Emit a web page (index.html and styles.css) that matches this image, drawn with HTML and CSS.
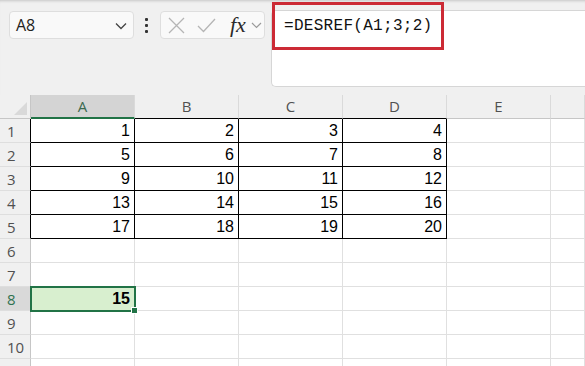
FILE: index.html
```html
<!DOCTYPE html>
<html lang="pt">
<head>
    <meta charset="UTF-8">
    <meta name="viewport" content="width=device-width, initial-scale=1.0">
    <title>DESREF</title>
    <link rel="stylesheet" href="styles.css">
</head>
<body>
    <div class="barra">
        <div class="caixa-nome">
            <span>A8</span>
            <svg class="seta" width="12" height="8" viewBox="0 0 12 8"><path d="M1 1.5 L6 6.5 L11 1.5" fill="none" stroke="#444" stroke-width="1.3"/></svg>
        </div>
        <div class="pontos"><i></i><i></i><i></i></div>
        <div class="grupo-fx">
            <svg width="17" height="17" viewBox="0 0 17 17"><path d="M1 1 L16 16 M16 1 L1 16" stroke="#b5b5b5" stroke-width="1.3"/></svg>
            <svg width="19" height="15" viewBox="0 0 19 15"><path d="M1 8 L6.5 13.5 L18 1" fill="none" stroke="#b5b5b5" stroke-width="1.3"/></svg>
            <span class="fx">fx</span>
            <svg width="11" height="7" viewBox="0 0 11 7"><path d="M1 1 L5.5 5.5 L10 1" fill="none" stroke="#9a9a9a" stroke-width="1.2"/></svg>
        </div>
        <div class="formula">=DESREF(A1;3;2)</div>
        <div class="destaque"></div>
    </div>

    <div class="planilha">
        <div class="c hd canto"><svg width="13" height="13" viewBox="0 0 13 13"><path d="M13 0 L13 13 L0 13 Z" fill="#d9d9d9"/></svg></div>
        <div class="c hd sel-col">A</div>
        <div class="c hd preto">B</div>
        <div class="c hd preto">C</div>
        <div class="c hd preto">D</div>
        <div class="c hd">E</div>
        <div class="c hd"></div>

        <div class="c rh preto">1</div>
        <div class="c b">1</div><div class="c b">2</div><div class="c b">3</div><div class="c b">4</div><div class="c"></div><div class="c"></div>

        <div class="c rh preto">2</div>
        <div class="c b">5</div><div class="c b">6</div><div class="c b">7</div><div class="c b">8</div><div class="c"></div><div class="c"></div>

        <div class="c rh preto">3</div>
        <div class="c b">9</div><div class="c b">10</div><div class="c b">11</div><div class="c b">12</div><div class="c"></div><div class="c"></div>

        <div class="c rh preto">4</div>
        <div class="c b">13</div><div class="c b">14</div><div class="c b">15</div><div class="c b">16</div><div class="c"></div><div class="c"></div>

        <div class="c rh preto">5</div>
        <div class="c b">17</div><div class="c b">18</div><div class="c b">19</div><div class="c b">20</div><div class="c"></div><div class="c"></div>

        <div class="c rh">6</div>
        <div class="c"></div><div class="c"></div><div class="c"></div><div class="c"></div><div class="c"></div><div class="c"></div>

        <div class="c rh">7</div>
        <div class="c"></div><div class="c"></div><div class="c"></div><div class="c"></div><div class="c"></div><div class="c"></div>

        <div class="c rh sel-lin">8</div>
        <div class="c ativa">15<span class="alca"></span></div><div class="c"></div><div class="c"></div><div class="c"></div><div class="c"></div><div class="c"></div>

        <div class="c rh">9</div>
        <div class="c"></div><div class="c"></div><div class="c"></div><div class="c"></div><div class="c"></div><div class="c"></div>

        <div class="c rh">10</div>
        <div class="c"></div><div class="c"></div><div class="c"></div><div class="c"></div><div class="c"></div><div class="c"></div>

        <div class="c rh"></div>
        <div class="c"></div><div class="c"></div><div class="c"></div><div class="c"></div><div class="c"></div><div class="c"></div>
    </div>
</body>
</html>
```

FILE: styles.css
```css
body {
  margin: 0;
  width: 585px;
  height: 366px;
  overflow: hidden;
  background: white;
  font-family: "Liberation Sans", Arial, sans-serif;
}

/* barra de formulas */
.barra {
  position: relative;
  display: flex;
  align-items: flex-start;
  height: 95px;
  box-sizing: border-box;
  padding: 11px 0 0 9px;
  background: #f0f0f0;
  box-shadow: inset 0 3px 3px -2px rgba(0, 0, 0, 0.18);
}

.caixa-nome {
  display: flex;
  align-items: center;
  justify-content: space-between;
  width: 125px;
  height: 28px;
  box-sizing: border-box;
  padding: 0 6px 0 6px;
  background: #f9f9f9;
  border: 1px solid #dedede;
  border-radius: 4px;
  font-family: "Open Sans", sans-serif;
  font-size: 16px;
  color: #222;
}

.seta {
  margin-top: 2px;
}

.pontos {
  display: flex;
  flex-direction: column;
  gap: 3px;
  margin: 7px 0 0 11px;
}

.pontos i {
  display: block;
  width: 3px;
  height: 3px;
  background: #333;
  border-radius: 1px;
}

.grupo-fx {
  display: flex;
  align-items: center;
  width: 105px;
  height: 28px;
  box-sizing: border-box;
  margin-left: 12px;
  padding-left: 7px;
  background: #f9f9f9;
  border: 1px solid #dedede;
  border-radius: 4px;
}

.grupo-fx svg:nth-child(2) {
  margin-left: 12px;
}

.fx {
  margin-left: 14px;
  margin-right: 5px;
  font-family: "Liberation Serif", serif;
  font-style: italic;
  font-size: 22px;
  line-height: 20px;
  color: #2a2a2a;
}

.formula {
  flex: 1;
  height: 77px;
  box-sizing: border-box;
  margin: -1px 0 0 6px;
  padding: 5px 0 0 12px;
  background: white;
  border: 1px solid #d6d6d6;
  border-right: none;
  border-radius: 5px 0 0 5px;
  font-family: "Liberation Mono", monospace;
  font-size: 16px;
  letter-spacing: 0.3px;
  line-height: 20px;
  color: #111;
}

.destaque {
  position: absolute;
  left: 272px;
  top: 2px;
  width: 172px;
  height: 48px;
  box-sizing: border-box;
  border: 3px solid #cc2a35;
}

/* grade */
.planilha {
  display: grid;
  grid-template-columns: 31px repeat(5, 104px) 34px;
  grid-auto-rows: 24px;
  width: 585px;
  height: 271px;
  overflow: hidden;
}

.c {
  position: relative;
  box-sizing: border-box;
  border-right: 1px solid #e0e0e0;
  border-bottom: 1px solid #e0e0e0;
  padding-right: 4px;
  text-align: right;
  font-size: 16px;
  line-height: 24px;
  color: #000;
}

.hd {
  background: #f0f0f0;
  border-right-color: #dadada;
  border-bottom-color: #c6c6c6;
  padding: 0;
  text-align: center;
  font-family: "Open Sans", sans-serif;
  font-size: 15px;
  line-height: 23px;
  color: #505050;
}

.canto {
  border-right-color: #c6c6c6;
}

.canto svg {
  position: absolute;
  right: 3px;
  bottom: 3px;
}

.sel-col {
  background: #d4d4d4;
  border-bottom: 2px solid #217346;
  color: #3b6a50;
}

.hd.preto {
  border-bottom-color: #000;
}

.rh {
  background: #f0f0f0;
  border-right-color: #c6c6c6;
  border-bottom-color: #dedede;
  padding: 0 0 0 7px;
  text-align: left;
  font-family: "Open Sans", sans-serif;
  font-size: 15px;
  color: #505050;
}

.rh.preto {
  border-right-color: #000;
}

.sel-lin {
  background: #d9d9d9;
  color: #2f7250;
}

.b {
  border-right-color: #000;
  border-bottom-color: #000;
}

.ativa {
  background: #d8efcf;
  font-weight: bold;
  outline: 2px solid #217346;
  outline-offset: -1px;
  z-index: 1;
}

.alca {
  position: absolute;
  right: -4px;
  bottom: -4px;
  width: 5px;
  height: 5px;
  background: #217346;
  border: 1px solid white;
}
```
